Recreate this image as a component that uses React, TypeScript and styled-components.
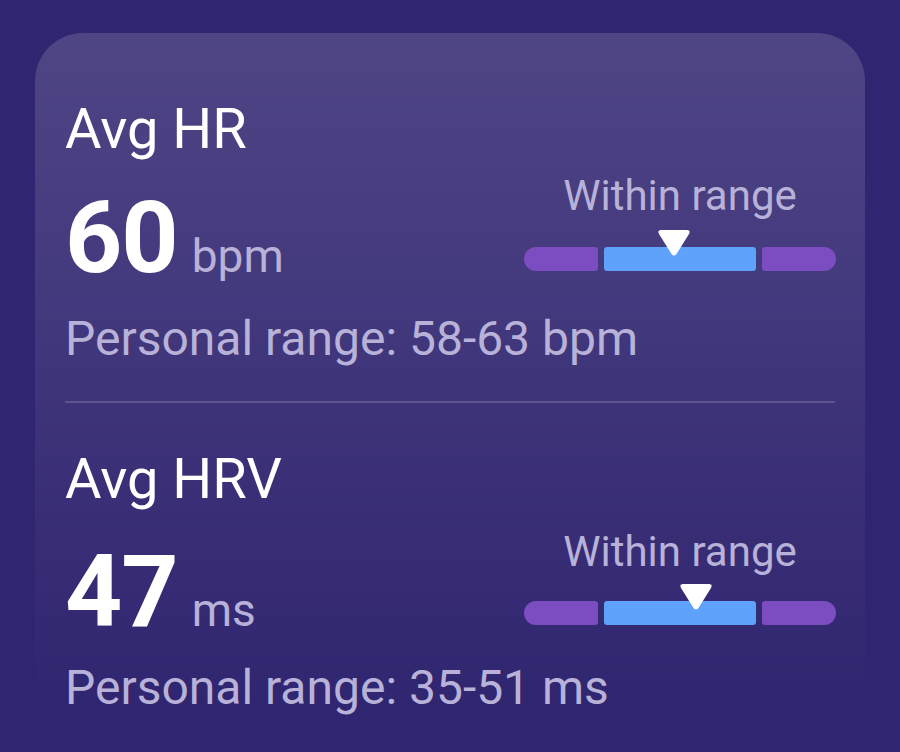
import styled, { createGlobalStyle } from 'styled-components';

const GlobalStyle = createGlobalStyle`
  html, body {
    margin: 0;
    padding: 0;
    height: 752px;
    overflow: hidden;
    background: #302570;
    font-family: Roboto, "Noto Sans", sans-serif;
    -webkit-font-smoothing: antialiased;
  }
`;

const Page = styled.div`
  padding: 33px 35px 0;
  box-sizing: border-box;
  height: 752px;
  overflow: hidden;
`;

// Card fades into the page background towards the bottom edge.
const Card = styled.section`
  min-height: 740px;
  box-sizing: border-box;
  padding: 64px 29px 0 30px;
  border-radius: 48px 48px 0 0;
  background: linear-gradient(
    180deg,
    rgba(255, 255, 255, 0.15) 0%,
    rgba(255, 255, 255, 0.06) 55%,
    rgba(255, 255, 255, 0) 92%
  );
  display: flex;
  flex-direction: column;
`;

const Metric = styled.div`
  display: flex;
  flex-direction: column;
`;

const Title = styled.h2`
  margin: 0;
  font-size: 56px;
  line-height: 64px;
  font-weight: 400;
  color: #ffffff;
`;

const ValueRow = styled.div<{ $gap: number }>`
  display: flex;
  justify-content: space-between;
  align-items: flex-end;
  margin-top: ${({ $gap }) => $gap}px;
`;

const Reading = styled.div`
  display: flex;
  align-items: baseline;
  gap: 14px;
`;

const Value = styled.span`
  font-size: 100px;
  line-height: 100px;
  font-weight: 700;
  color: #ffffff;
  letter-spacing: -1px;
`;

const Unit = styled.span`
  font-size: 46px;
  line-height: 56px;
  color: #b8b2d8;
`;

// Label + track hang above the reading line, so the column pulls itself up.
const Indicator = styled.div`
  width: 312px;
  display: flex;
  flex-direction: column;
  align-items: center;
  margin: -40px 0 17px;
`;

const IndicatorLabel = styled.span<{ $gap: number }>`
  font-size: 42px;
  line-height: 48px;
  color: #b8b2d8;
  margin-bottom: ${({ $gap }) => $gap}px;
`;

const Track = styled.div`
  position: relative;
  width: 100%;
  height: 24px;
  display: flex;
  gap: 6px;
`;

const Segment = styled.div<{ $kind: 'low' | 'normal' | 'high' }>`
  height: 100%;
  flex: ${({ $kind }) => ($kind === 'normal' ? '0 0 152px' : '1 1 0')};
  background: ${({ $kind }) => ($kind === 'normal' ? '#5fa2fc' : '#7b4dc0')};
  border-radius: ${({ $kind }) =>
    $kind === 'low' ? '12px 3px 3px 12px' : $kind === 'high' ? '3px 12px 12px 3px' : '3px'};
`;

const Marker = styled.svg`
  position: absolute;
  top: -17px;
  width: 34px;
  height: 26px;
  transform: translateX(-50%);
`;

const Range = styled.p<{ $gap: number }>`
  margin: ${({ $gap }) => $gap}px 0 0;
  font-size: 48px;
  line-height: 56px;
  color: #b8b2d8;
`;

const Divider = styled.hr`
  margin: 34px 1px 44px 0;
  border: none;
  height: 2px;
  background: rgba(255, 255, 255, 0.16);
`;

type MetricData = {
  title: string;
  value: string;
  unit: string;
  low: number;
  high: number;
  position: number; // 0..1 along the track
  titleGap: number;
  labelGap: number;
  rangeGap: number;
};

const metrics: MetricData[] = [
  { title: 'Avg HR', value: '60', unit: 'bpm', low: 58, high: 63, position: 0.481, titleGap: 27, labelGap: 27, rangeGap: 23 },
  { title: 'Avg HRV', value: '47', unit: 'ms', low: 35, high: 51, position: 0.55, titleGap: 31, labelGap: 25, rangeGap: 18 },
];

function RangeMarker({ position }: { position: number }) {
  return (
    <Marker viewBox="0 0 34 26" style={{ left: `${position * 100}%` }}>
      <path
        d="M4 0 H30 Q34 0 32 4 L19.5 24 Q17 27 14.5 24 L2 4 Q0 0 4 0 Z"
        fill="#ffffff"
      />
    </Marker>
  );
}

function MetricBlock({ m }: { m: MetricData }) {
  return (
    <Metric>
      <Title>{m.title}</Title>
      <ValueRow $gap={m.titleGap}>
        <Reading>
          <Value>{m.value}</Value>
          <Unit>{m.unit}</Unit>
        </Reading>
        <Indicator>
          <IndicatorLabel $gap={m.labelGap}>Within range</IndicatorLabel>
          <Track>
            <Segment $kind="low" />
            <Segment $kind="normal" />
            <Segment $kind="high" />
            <RangeMarker position={m.position} />
          </Track>
        </Indicator>
      </ValueRow>
      <Range $gap={m.rangeGap}>
        Personal range: {m.low}-{m.high} {m.unit}
      </Range>
    </Metric>
  );
}

export default function App() {
  return (
    <>
      <GlobalStyle />
      <Page>
        <Card>
          <MetricBlock m={metrics[0]} />
          <Divider />
          <MetricBlock m={metrics[1]} />
        </Card>
      </Page>
    </>
  );
}
